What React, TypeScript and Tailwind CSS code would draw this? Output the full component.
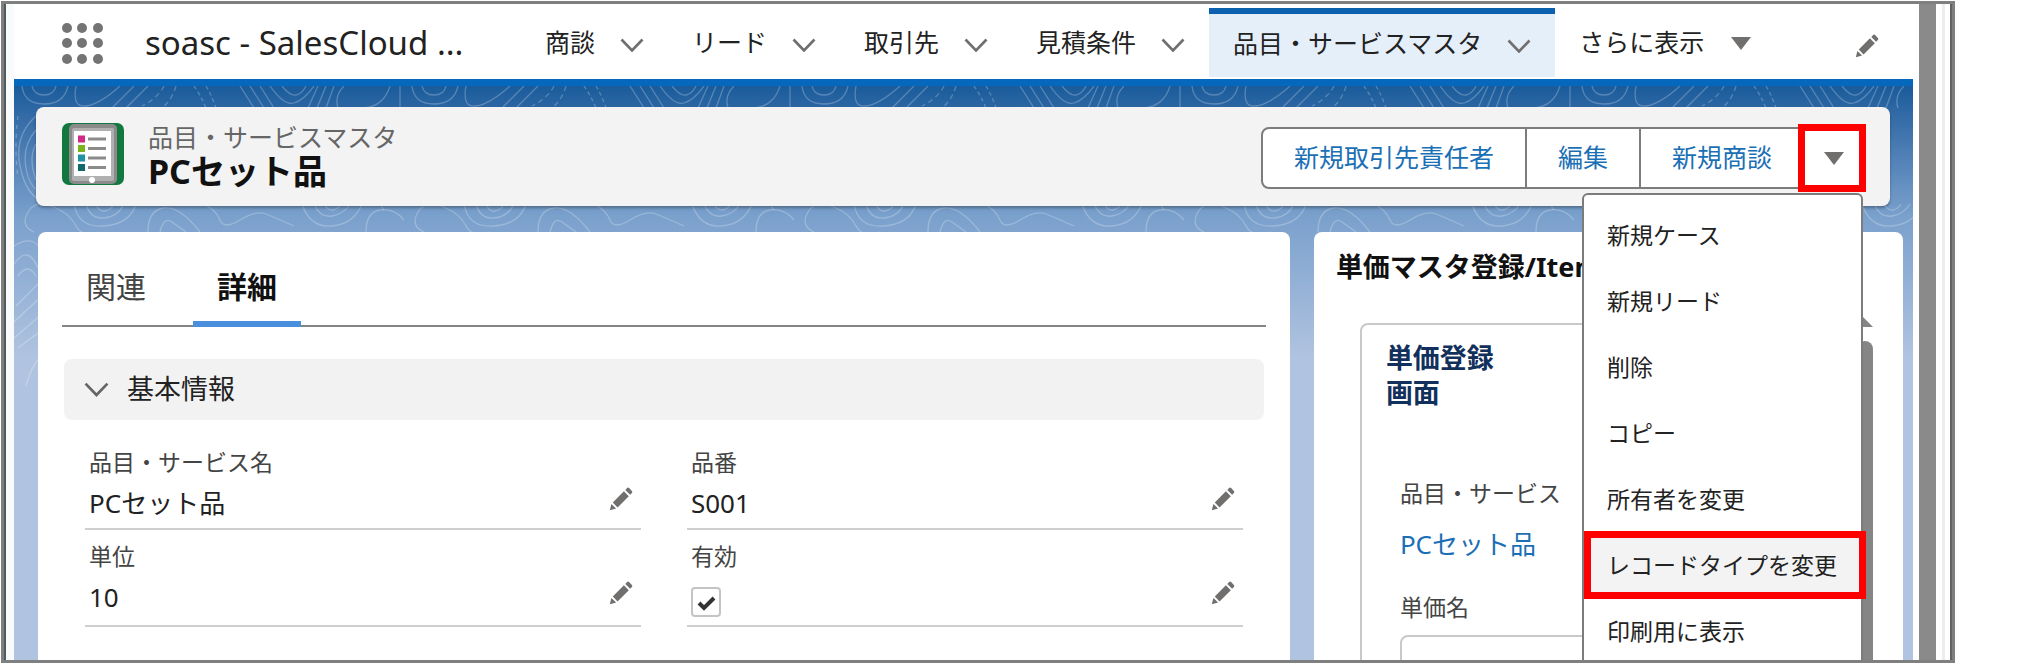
import { useState } from "react";
import type { ReactNode } from "react";

const navItems = ["商談", "リード", "取引先", "見積条件", "品目・サービスマスタ"];
const activeNav = "品目・サービスマスタ";

const menuItems = [
  "新規ケース",
  "新規リード",
  "削除",
  "コピー",
  "所有者を変更",
  "レコードタイプを変更",
  "印刷用に表示",
];
const highlightedItem = "レコードタイプを変更";

const bullets = ["#cf2a86", "#7ab51d", "#1f93a5", "#0f6b6b"];

const ChevronDown = ({ className }: { className?: string }) => (
  <svg
    viewBox="0 0 24 14"
    className={className}
    fill="none"
    stroke="currentColor"
    strokeWidth="2.6"
  >
    <path d="M1.5 1.5 12 12.5 22.5 1.5" />
  </svg>
);

const TriangleDown = () => (
  <svg viewBox="0 0 20 13" className="h-[13px] w-5" fill="#706f6e">
    <path d="M0 0h20L10 13z" />
  </svg>
);

const Pencil = () => (
  <svg viewBox="0 0 24 24" className="size-6" fill="#706f6e">
    <path d="M.8 23.2 2.4 17l4.7 4.6z" />
    <path d="M3.8 15.6 14.9 4.3l4.9 4.9L8.6 20.4z" />
    <path d="m16.3 2.9 1.8-1.8q1-1 2 0l2.8 2.8q1 1 0 2l-1.8 1.8z" />
  </svg>
);

const ItemIcon = () => (
  <svg viewBox="0 0 62 62" className="size-[62px] shrink-0">
    <rect width="62" height="62" rx="7" fill="#12783f" />
    <rect x="7" y="1" width="48" height="60" rx="5" fill="#8b8b8b" />
    <rect x="10" y="5" width="42" height="53" rx="2" fill="#b0b0b0" />
    <rect x="12" y="8" width="37" height="45" fill="#fff" />
    {bullets.map((color, i) => (
      <g key={color}>
        <rect x="16" y={12.5 + i * 9.5} width="7" height="7" fill={color} />
        <rect x="26" y={14.5 + i * 9.5} width="18" height="3" fill="#8b8b8b" />
      </g>
    ))}
    <circle cx="30" cy="57" r="3" fill="#fff" />
  </svg>
);

// contour lines over the blue page background
const Topography = () => (
  <svg className="absolute inset-x-0 top-0 h-[340px] w-full">
    <defs>
      <pattern id="topo" width="390" height="340" patternUnits="userSpaceOnUse">
        <g fill="none" stroke="#fff" strokeOpacity="0.24" strokeWidth="1.3">
          <path d="M8 0q2 18 22 18T54 0M18 0q2 9 12 9T42 0" />
          <path d="M62 0q-4 22 10 20T106 0M120 0 98 22M134 0l-22 22" />
          <path d="M150 0q-6 12-22 20M162 0q-4 14-14 22" strokeDasharray="5 4" />
          <path d="M180 0q6 8 12 22M192 0q6 10 10 22" strokeDasharray="4 3" />
          <path d="M226 0 240 22M236 0l14 22M246 0l14 22M256 0q14 20 24 17T300 0M268 0q8 10 14 9T292 0" />
          <path d="M304 0 294 22M312 0l-9 22M320 0l-8 22M330 0q-10 10-6 22" />
          <path d="M376 0q-6 20-26 22M386 0v22" />
          <path d="M22 30q-22 20-16 50t24 36M22 44q-14 16-10 38t16 24M22 58q-8 14 0 36" />
          <path d="M4 30q-4 30 0 62" strokeDasharray="4 5" />
          <path d="M20 146q-14-6-6-20t28-4q14 6 20 18t24 6" />
          <path d="M60 118q4 24 30 22t32-22M72 118q4 15 18 14t20-14M82 118q3 8 9 7t9-7" />
          <path d="M134 146q0-22 16-24t36 24M146 146q4-16 12-10l14 10" />
          <path d="M190 118q12 6 16 16t20 0 26-6 28 12" />
          <path d="M288 118q8 24 30 22t30-22M300 118q6 14 18 12t18-12M310 118q4 7 9 6t8-6" />
          <path d="M352 146q0-20 14-22t24 10" />
          <path d="M0 160q22-14 30 10M0 178q14-20 24 4M4 190q10-14 18 0M2 220l24-24M0 236l30-28M0 252l28-24M4 262l24-18M12 300q6-24 20-34" />
          <path d="M372 34q-20 22 0 44M376 90q-14 26-6 34M370 160q12-14 20 0M372 184l18-14" />
        </g>
      </pattern>
    </defs>
    <rect width="100%" height="100%" fill="url(#topo)" />
  </svg>
);

const Field = ({ label, children }: { label: string; children: ReactNode }) => (
  <div className="flex flex-col border-b-2 border-[#cfcfcf] pt-[10px] pl-1">
    <span className="text-[23px] leading-8 text-[#444]">{label}</span>
    <div className="flex min-h-[50px] flex-1 justify-between pr-2 text-[26px] leading-[50px] text-[#222]">
      {children}
      <button aria-label={`${label} を編集`} className="mt-[9px] h-6">
        <Pencil />
      </button>
    </div>
  </div>
);

const Menu = () => (
  <ul className="absolute top-full right-[3px] z-10 mt-1 w-[281px] rounded-md border-2 border-[#7c7c7c] bg-white py-[7px]">
    {menuItems.map((item) => (
      <li key={item} className="relative">
        <button
          className={
            item === highlightedItem
              ? "h-[66px] w-full bg-[#f3f3f3] pl-[23px] text-left text-[23px] text-[#222]"
              : "h-[66px] w-full pl-[23px] text-left text-[23px] text-[#222]"
          }
        >
          {item}
        </button>
        {item === highlightedItem && (
          <span className="pointer-events-none absolute -inset-y-px -right-[5px] left-0 border-7 border-[#fe0000]" />
        )}
      </li>
    ))}
  </ul>
);

const App = () => {
  const [open, setOpen] = useState(true);
  const [active, setActive] = useState(true);

  return (
    <div className="h-screen bg-white pt-px pr-[72px] pb-[6px] pl-px font-['Noto_Sans','Noto_Sans_CJK_JP',sans-serif]">
      <div className="flex h-full overflow-hidden border-3 border-[#7f7f7f]">
        <div className="w-[2px] bg-[#4f5c5b]" />
        <div className="w-2 bg-[#f8fafb]" />

        <div className="flex min-w-0 flex-1 flex-col">
          <nav className="flex h-[82px] shrink-0 items-stretch border-b-7 border-[#0668bd] pt-[3px] whitespace-nowrap text-[#222]">
            <button aria-label="アプリケーションランチャー" className="ml-12">
              <svg viewBox="0 0 41 41" className="size-[41px]" fill="#747474">
                {[5, 20, 36].map((y) =>
                  [5, 20, 36].map((x) => (
                    <circle key={`${x}-${y}`} cx={x} cy={y} r="5" />
                  ))
                )}
              </svg>
            </button>
            <span className="ml-[42px] w-[376px] self-center text-[33px]">
              soasc - SalesCloud ...
            </span>
            {navItems.map((item) => (
              <a
                key={item}
                href="#"
                className={
                  item === activeNav
                    ? "mt-px mb-[2px] flex items-center gap-[25px] border-t-6 border-[#0b60b0] bg-[#e5effa] px-6 pb-1 text-[25px]"
                    : "flex items-center gap-[25px] px-6 text-[25px]"
                }
              >
                {item}
                <ChevronDown className="mt-1 w-6 text-[#706f6e]" />
              </a>
            ))}
            <button className="flex items-center gap-[27px] px-6 text-[25px]">
              さらに表示
              <TriangleDown />
            </button>
            <button aria-label="編集" className="mt-[6px] mr-[34px] ml-auto">
              <Pencil />
            </button>
          </nav>

          <main className="relative flex flex-1 flex-col bg-[#b0c3e0] bg-linear-to-b from-[#195b9b] via-[#7aa0cc] via-[130px] to-[#b0c3e0] to-[270px] pt-[21px]">
            <Topography />
            <header className="relative z-10 mr-[23px] ml-[22px] flex h-[99px] items-start rounded-lg bg-[#f3f3f3] pt-4 pr-6 pl-[26px] shadow-[0_2px_3px_rgba(0,0,0,0.3)]">
              <ItemIcon />
              <div className="ml-6">
                <p className="text-[25px] leading-7 text-[#666]">
                  品目・サービスマスタ
                </p>
                <h1 className="text-[34px] leading-10 font-bold text-[#111]">
                  PCセット品
                </h1>
              </div>
              <div className="relative mt-1 ml-auto text-[25px] whitespace-nowrap text-[#1b6fb5]">
                <div className="flex h-[62px] rounded-lg border-2 border-[#7c7c7c] bg-white">
                  <button className="border-r-2 border-[#7c7c7c] px-[31px]">
                    新規取引先責任者
                  </button>
                  <button className="border-r-2 border-[#7c7c7c] px-[31px]">
                    編集
                  </button>
                  <button className="px-[31px]">新規商談</button>
                  <button
                    aria-label="その他のアクション"
                    aria-expanded={open}
                    className="relative flex w-[61px] items-center justify-center"
                    onClick={() => setOpen(!open)}
                  >
                    <TriangleDown />
                    <span className="pointer-events-none absolute -inset-y-[5px] -right-[2px] -left-[5px] border-7 border-[#fe0000]" />
                  </button>
                </div>
                {open && <Menu />}
              </div>
            </header>

            <div className="relative mt-[26px] mr-[10px] ml-6 grid flex-1 grid-cols-[68fr_32fr] gap-6">
              <section className="rounded-t-lg bg-white px-6">
                <div
                  role="tablist"
                  className="flex h-[95px] items-end gap-[23px] border-b-2 border-[#848685] text-[30px]"
                >
                  <button
                    role="tab"
                    className="mb-[-2px] h-[76px] border-b-6 border-transparent px-6 text-[#444]"
                  >
                    関連
                  </button>
                  <button
                    role="tab"
                    aria-selected="true"
                    className="mb-[-2px] h-[76px] border-b-6 border-[#4a8fde] px-6 font-bold text-[#111]"
                  >
                    詳細
                  </button>
                </div>
                <h2 className="mx-[2px] mt-8">
                  <button className="flex h-[61px] w-full items-center gap-[18px] rounded-lg bg-[#f2f2f2] pl-5 text-[27px] text-[#222]">
                    <ChevronDown className="w-[25px] text-[#666]" />
                    基本情報
                  </button>
                </h2>
                <div className="mt-4 grid grid-cols-2 gap-x-[46px] px-[23px]">
                  <Field label="品目・サービス名">PCセット品</Field>
                  <Field label="品番">S001</Field>
                  <Field label="単位">10</Field>
                  <Field label="有効">
                    <span className="grid h-[53px] content-end pb-2">
                      <input
                        type="checkbox"
                        aria-label="有効"
                        checked={active}
                        onChange={() => setActive(!active)}
                        className="col-start-1 row-start-1 size-[30px] appearance-none rounded-sm border-2 border-[#c4c4c4] bg-white"
                      />
                      {active && (
                        <svg
                          viewBox="0 0 30 30"
                          className="pointer-events-none col-start-1 row-start-1 size-[30px]"
                          fill="none"
                          stroke="#333"
                          strokeWidth="4"
                        >
                          <path d="m8 16 5 5L23 11" />
                        </svg>
                      )}
                    </span>
                  </Field>
                </div>
              </section>

              <section className="flex flex-col rounded-t-lg bg-white pt-[17px] pr-[30px]">
                <h2 className="pl-[22px] text-[27px] leading-9 font-bold text-[#111]">
                  単価マスタ登録/Item
                </h2>
                <div className="mt-[26px] flex flex-1 pl-[46px]">
                  <div className="mt-3 mr-5 flex-1 rounded-tl-lg border-2 border-b-0 border-[#c9c9c9] pt-[15px] pl-6">
                    <h3 className="w-[110px] text-[27px] leading-[35px] font-bold text-[#12305c]">
                      単価登録画面
                    </h3>
                    <div className="mt-[67px] flex flex-col items-start pl-[14px] text-[23px] leading-8 text-[#444]">
                      <span>品目・サービス</span>
                      <a
                        href="#"
                        className="mt-[15px] text-[26px] leading-10 text-[#1b6fb5]"
                      >
                        PCセット品
                      </a>
                      <label htmlFor="priceName" className="mt-[27px]">
                        単価名
                      </label>
                      <input
                        id="priceName"
                        className="mt-3 h-14 w-[300px] rounded-lg border-2 border-[#c9c9c9] px-3"
                      />
                    </div>
                  </div>
                  <div className="flex w-4 flex-col items-end">
                    <svg
                      viewBox="0 0 20 10"
                      className="mt-[6px] h-[10px] w-5 shrink-0"
                      fill="#858585"
                    >
                      <path d="M0 10h20L10 0z" />
                    </svg>
                    <div className="mt-[14px] w-4 flex-1 rounded-t-lg bg-[#858585]" />
                  </div>
                </div>
              </section>
            </div>
          </main>
        </div>

        <div className="w-[6px] bg-white" />
        <div className="w-[17px] bg-[#8a8a8a]" />
        <div className="mr-[5px] ml-[6px] w-[3px] bg-[#ededed]" />
        <div className="w-[2px] bg-[#5f6463]" />
      </div>
    </div>
  );
};

export default App;
